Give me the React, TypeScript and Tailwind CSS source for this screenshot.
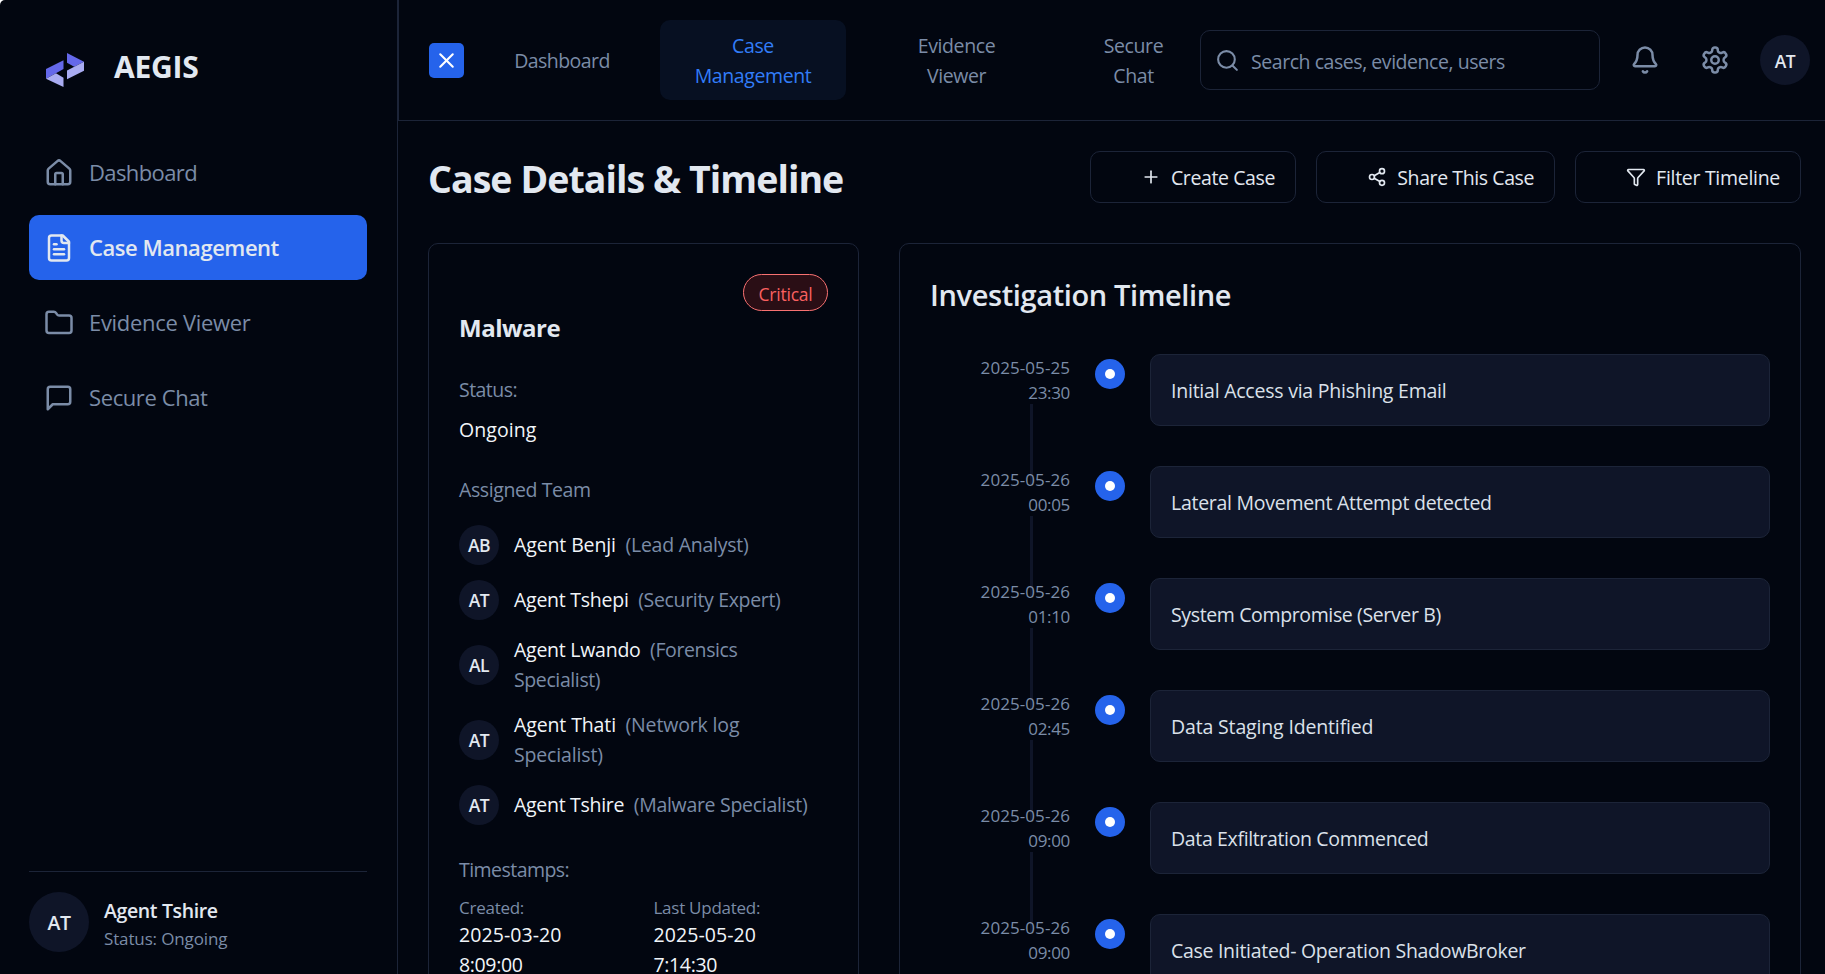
import React from "react";

type IconProps = { className?: string; children: React.ReactNode };

function Icon({ className = "", children }: IconProps) {
  return (
    <svg viewBox="0 0 24 24" fill="none" stroke="currentColor" strokeWidth="2" strokeLinecap="round" strokeLinejoin="round" className={`shrink-0 ${className}`}>
      {children}
    </svg>
  );
}

const icons = {
  home: (
    <>
      <path d="M15 21v-8a1 1 0 0 0-1-1h-4a1 1 0 0 0-1 1v8" />
      <path d="M3 10a2 2 0 0 1 .709-1.528l7-5.999a2 2 0 0 1 2.582 0l7 5.999A2 2 0 0 1 21 10v9a2 2 0 0 1-2 2H5a2 2 0 0 1-2-2z" />
    </>
  ),
  file: (
    <>
      <path d="M15 2H6a2 2 0 0 0-2 2v16a2 2 0 0 0 2 2h12a2 2 0 0 0 2-2V7Z" />
      <path d="M14 2v4a2 2 0 0 0 2 2h4" />
      <path d="M10 9H8" />
      <path d="M16 13H8" />
      <path d="M16 17H8" />
    </>
  ),
  folder: <path d="M20 20a2 2 0 0 0 2-2V8a2 2 0 0 0-2-2h-7.9a2 2 0 0 1-1.69-.9L9.6 3.9A2 2 0 0 0 7.93 3H4a2 2 0 0 0-2 2v13a2 2 0 0 0 2 2Z" />,
  message: <path d="M21 15a2 2 0 0 1-2 2H7l-4 4V5a2 2 0 0 1 2-2h14a2 2 0 0 1 2 2z" />,
  search: (
    <>
      <circle cx="11" cy="11" r="8" />
      <path d="m21 21-4.3-4.3" />
    </>
  ),
  bell: (
    <>
      <path d="M10.268 21a2 2 0 0 0 3.464 0" />
      <path d="M3.262 15.326A1 1 0 0 0 4 17h16a1 1 0 0 0 .74-1.673C19.41 13.956 18 12.499 18 8A6 6 0 0 0 6 8c0 4.499-1.411 5.956-2.738 7.326" />
    </>
  ),
  settings: (
    <>
      <path d="M12.22 2h-.44a2 2 0 0 0-2 2v.18a2 2 0 0 1-1 1.73l-.43.25a2 2 0 0 1-2 0l-.15-.08a2 2 0 0 0-2.73.73l-.22.38a2 2 0 0 0 .73 2.73l.15.1a2 2 0 0 1 1 1.72v.51a2 2 0 0 1-1 1.74l-.15.09a2 2 0 0 0-.73 2.73l.22.38a2 2 0 0 0 2.73.73l.15-.08a2 2 0 0 1 2 0l.43.25a2 2 0 0 1 1 1.73V20a2 2 0 0 0 2 2h.44a2 2 0 0 0 2-2v-.18a2 2 0 0 1 1-1.73l.43-.25a2 2 0 0 1 2 0l.15.08a2 2 0 0 0 2.73-.73l.22-.39a2 2 0 0 0-.73-2.73l-.15-.08a2 2 0 0 1-1-1.74v-.5a2 2 0 0 1 1-1.74l.15-.09a2 2 0 0 0 .73-2.73l-.22-.38a2 2 0 0 0-2.73-.73l-.15.08a2 2 0 0 1-2 0l-.43-.25a2 2 0 0 1-1-1.73V4a2 2 0 0 0-2-2z" />
      <circle cx="12" cy="12" r="3" />
    </>
  ),
  plus: (
    <>
      <path d="M5 12h14" />
      <path d="M12 5v14" />
    </>
  ),
  share: (
    <>
      <circle cx="18" cy="5" r="3" />
      <circle cx="6" cy="12" r="3" />
      <circle cx="18" cy="19" r="3" />
      <path d="m8.59 13.51 6.83 3.98" />
      <path d="m15.41 6.51-6.82 3.98" />
    </>
  ),
  filter: <path d="M10 20a1 1 0 0 0 .553.895l2 1A1 1 0 0 0 14 21v-7a2 2 0 0 1 .517-1.341L21.74 4.67A1 1 0 0 0 21 3H3a1 1 0 0 0-.742 1.67l7.225 7.989A2 2 0 0 1 10 14z" />,
  close: (
    <>
      <path d="M18 6 6 18" />
      <path d="m6 6 12 12" />
    </>
  ),
};

function Logo() {
  return (
    <svg viewBox="0 0 38 34" className="h-[34px] w-[38px] shrink-0">
      <path d="M0 16 17.5 7.3V16L0 25.7Z" fill="#6468ea" />
      <path d="M0 25.7 10 20.3 17.5 24.8V34Z" fill="#a9acf2" />
      <path d="M21 0 38 8.8 28.2 13.8 21 9.8Z" fill="#6468ea" />
      <path d="M38 8.8V17.8L21 26.2V17.6Z" fill="#a9acf2" />
    </svg>
  );
}

const sideItems = [
  { label: "Dashboard", icon: icons.home, text: "tracking-[-0.028em]" },
  { label: "Case Management", icon: icons.file, active: true, text: "tracking-[-0.021em]" },
  { label: "Evidence Viewer", icon: icons.folder, text: "tracking-[-0.014em]" },
  { label: "Secure Chat", icon: icons.message, text: "tracking-[-0.018em]" },
];

function Sidebar() {
  return (
    <aside className="flex w-[398px] shrink-0 flex-col border-r border-[#1c2438] pr-[30px] pb-[22px] pl-[29px]">
      <div className="flex items-center gap-[30px] pt-[43px] pl-[17px]">
        <div className="pt-2">
          <Logo />
        </div>
        <span className="pt-px text-[30px] leading-[45px] font-bold tracking-[-0.008em]">AEGIS</span>
      </div>
      <nav className="mt-[51px] flex flex-col gap-2.5">
        {sideItems.map((item) => (
          <a
            key={item.label}
            className={`flex h-[65px] items-center gap-[15px] rounded-[10px] pl-[15px] text-[22px] ${item.text} ${item.active ? "bg-[#2563eb] font-semibold text-[#e2e8f0]" : "text-[#7b8ca7]"}`}
          >
            <Icon className="size-[30px]">{item.icon}</Icon>
            <span className="pb-px">{item.label}</span>
          </a>
        ))}
      </nav>
      <div className="mt-auto flex items-center gap-[15px] border-t border-[#1c2438] pt-5">
        <div className="flex size-[60px] items-center justify-center rounded-full bg-[#0f1528] pt-0.5 text-[19.5px] font-semibold tracking-[-0.02em]">AT</div>
        <div className="pt-0.5">
          <p className="text-[19.5px] leading-[30px] font-semibold tracking-[-0.019em]">Agent Tshire</p>
          <p className="text-[17px] leading-[25px] tracking-[-0.008em] text-[#7b8ca7]">Status: Ongoing</p>
        </div>
      </div>
    </aside>
  );
}

function Header() {
  return (
    <header className="flex h-[121px] items-center border-b border-l border-[#1c2438] pl-[30px] text-[19.5px] leading-[30px] tracking-[-0.02em] text-[#7b8ca7]">
      <button className="flex size-[35px] items-center justify-center rounded-[5px] bg-[#2563eb] text-white">
        <Icon className="size-[25px]">{icons.close}</Icon>
      </button>
      <nav className="flex items-center text-center">
        <a className="w-[196px] pt-px tracking-[-0.028em]">Dashboard</a>
        <a className="flex h-20 w-[186px] flex-col justify-center rounded-[10px] bg-[#071022] pt-px text-[#327df8]">
          <span>Case</span>
          <span>Management</span>
        </a>
        <a className="flex w-[221px] flex-col pt-px">
          <span>Evidence</span>
          <span>Viewer</span>
        </a>
        <a className="flex w-[133px] flex-col pt-px">
          <span>Secure</span>
          <span>Chat</span>
        </a>
      </nav>
      <div className="flex h-[60px] w-[400px] items-center gap-[11px] rounded-[10px] border border-[#1c2438] pl-[14px]">
        <Icon className="size-[25px]">{icons.search}</Icon>
        <span className="pt-1 tracking-[-0.023em]">Search cases, evidence, users</span>
      </div>
      <Icon className="ml-[30px] size-[30px]">{icons.bell}</Icon>
      <Icon className="ml-[40px] size-[30px]">{icons.settings}</Icon>
      <div className="ml-[30px] flex size-[50px] items-center justify-center rounded-full bg-[#0f1528] pt-0.5 text-[17.5px] font-semibold text-[#e2e8f0]">AT</div>
    </header>
  );
}

const actions = [
  { label: "Create Case", icon: icons.plus, box: "w-[206px] tracking-[-0.02em]" },
  { label: "Share This Case", icon: icons.share, box: "w-[239px] tracking-[-0.021em]" },
  { label: "Filter Timeline", icon: icons.filter, box: "w-[226px] tracking-[-0.015em]" },
];

const team = [
  { initials: "AB", name: "Agent Benji", role: "(Lead Analyst)", nameText: "tracking-[-0.006em]", roleText: "tracking-[-0.013em]" },
  { initials: "AT", name: "Agent Tshepi", role: "(Security Expert)", nameText: "tracking-[-0.013em]", roleText: "tracking-[-0.017em]" },
  { initials: "AL", name: "Agent Lwando", role: "(Forensics Specialist)", nameText: "tracking-[-0.013em]", roleText: "tracking-[-0.02em]" },
  { initials: "AT", name: "Agent Thati", role: "(Network log Specialist)", nameText: "tracking-[-0.006em]", roleText: "tracking-[-0.008em]" },
  { initials: "AT", name: "Agent Tshire", role: "(Malware Specialist)", nameText: "tracking-[-0.015em]", roleText: "tracking-[-0.015em]" },
];

const stamps = [
  { label: "Created:", date: "2025-03-20", time: "8:09:00" },
  { label: "Last Updated:", date: "2025-05-20", time: "7:14:30" },
];

function CaseCard() {
  return (
    <section className="h-[900px] w-[431px] shrink-0 rounded-[10px] border border-[#1c2438] px-[30px] pt-[30px] text-[19.5px] leading-[30px] tracking-[-0.028em]">
      <div className="flex justify-end">
        <span className="flex h-[37px] w-[85px] items-center justify-center rounded-full border border-[#f87171] bg-[#2a0e15] pt-0.5 text-[17.5px] tracking-[-0.012em] text-[#f96060]">Critical</span>
      </div>
      <h2 className="-mt-px text-[24px] leading-[35px] font-bold tracking-[-0.02em]">Malware</h2>
      <p className="mt-[30px] text-[#7b8ca7]">Status:</p>
      <p className="mt-2.5 tracking-[0.004em] text-[#f1f5f9]">Ongoing</p>
      <p className="mt-[30px] tracking-[-0.021em] text-[#7b8ca7]">Assigned Team</p>
      <ul className="mt-5 flex flex-col gap-[15px]">
        {team.map((m) => (
          <li key={m.name} className="flex items-center gap-[15px]">
            <span className="flex size-10 shrink-0 items-center justify-center rounded-full bg-[#0f1528] text-[17.5px] font-semibold">{m.initials}</span>
            <span className="w-[300px] text-[#f1f5f9]">
              <span className={m.nameText}>{m.name}</span> <span className={`ml-[5px] text-[#7b8ca7] ${m.roleText}`}>{m.role}</span>
            </span>
          </li>
        ))}
      </ul>
      <p className="mt-[30px] text-[#7b8ca7]">Timestamps:</p>
      <div className="mt-2.5 grid grid-cols-2 gap-5">
        {stamps.map((s) => (
          <div key={s.label} className="text-[#f1f5f9]">
            <p className="text-[17px] leading-[25px] tracking-[-0.015em] text-[#7b8ca7]">{s.label}</p>
            <p className="tracking-[0.004em]">{s.date}</p>
            <p className="tracking-[-0.018em]">{s.time}</p>
          </div>
        ))}
      </div>
    </section>
  );
}

const events = [
  { date: "2025-05-25", time: "23:30", title: "Initial Access via Phishing Email", text: "tracking-[-0.012em]" },
  { date: "2025-05-26", time: "00:05", title: "Lateral Movement Attempt detected", text: "tracking-[-0.014em]" },
  { date: "2025-05-26", time: "01:10", title: "System Compromise (Server B)", text: "tracking-[-0.019em]" },
  { date: "2025-05-26", time: "02:45", title: "Data Staging Identified", text: "tracking-[-0.008em]" },
  { date: "2025-05-26", time: "09:00", title: "Data Exfiltration Commenced", text: "tracking-[-0.018em]" },
  { date: "2025-05-26", time: "09:00", title: "Case Initiated- Operation ShadowBroker", text: "tracking-[-0.015em]" },
];

function Timeline() {
  return (
    <section className="h-[900px] w-[902px] shrink-0 rounded-[10px] border border-[#1c2438] px-[30px] pt-[28px]">
      <h2 className="text-[29px] leading-[45px] font-semibold tracking-[-0.013em]">Investigation Timeline</h2>
      <ol className="mt-[37px] flex flex-col">
        {events.map((e, i) => (
          <li key={e.title} className="relative flex h-28 items-start">
            {i < events.length - 1 && <span className="absolute top-[50px] left-[100px] h-20 w-[3px] bg-[#0f1528]" />}
            <div className="relative w-[140px] pt-px text-right text-[17px] leading-[25px] text-[#7b8ca7]">
              <p className="tracking-[0.004em]">{e.date}</p>
              <p className="tracking-[-0.02em]">{e.time}</p>
            </div>
            <span className="mt-[5px] ml-[25px] flex size-[30px] items-center justify-center rounded-full bg-[#2563eb]">
              <span className="size-2.5 rounded-full bg-white" />
            </span>
            <div className={`ml-[25px] flex h-[72px] w-[620px] items-center rounded-[10px] border border-[#1c2438] bg-[#0f1528] pt-0.5 pl-5 text-[19.5px] text-[#dbe1ea] ${e.text}`}>
              {e.title}
            </div>
          </li>
        ))}
      </ol>
    </section>
  );
}

export default function App() {
  return (
    <div className="flex h-[974px] w-[1825px] overflow-hidden rounded-tl-[5px] bg-[#020610] font-['Open_Sans','Noto_Sans',sans-serif] text-[#e2e8f0]">
      <Sidebar />
      <main className="min-w-0 flex-1">
        <Header />
        <div className="pt-[30px] pl-[30px]">
          <div className="flex h-[52px] items-center">
            <h1 className="w-[662px] pt-0.5 text-[37.5px] leading-[45px] font-bold tracking-[-0.025em]">Case Details &amp; Timeline</h1>
            <div className="flex gap-5">
              {actions.map((a) => (
                <button key={a.label} className={`flex h-[52px] items-center justify-end gap-2.5 rounded-[10px] border border-[#1c2438] pr-5 text-[19.5px] ${a.box}`}>
                  <Icon className="size-5">{a.icon}</Icon>
                  <span className="pt-0.5">{a.label}</span>
                </button>
              ))}
            </div>
          </div>
          <div className="mt-10 flex gap-10">
            <CaseCard />
            <Timeline />
          </div>
        </div>
      </main>
    </div>
  );
}
